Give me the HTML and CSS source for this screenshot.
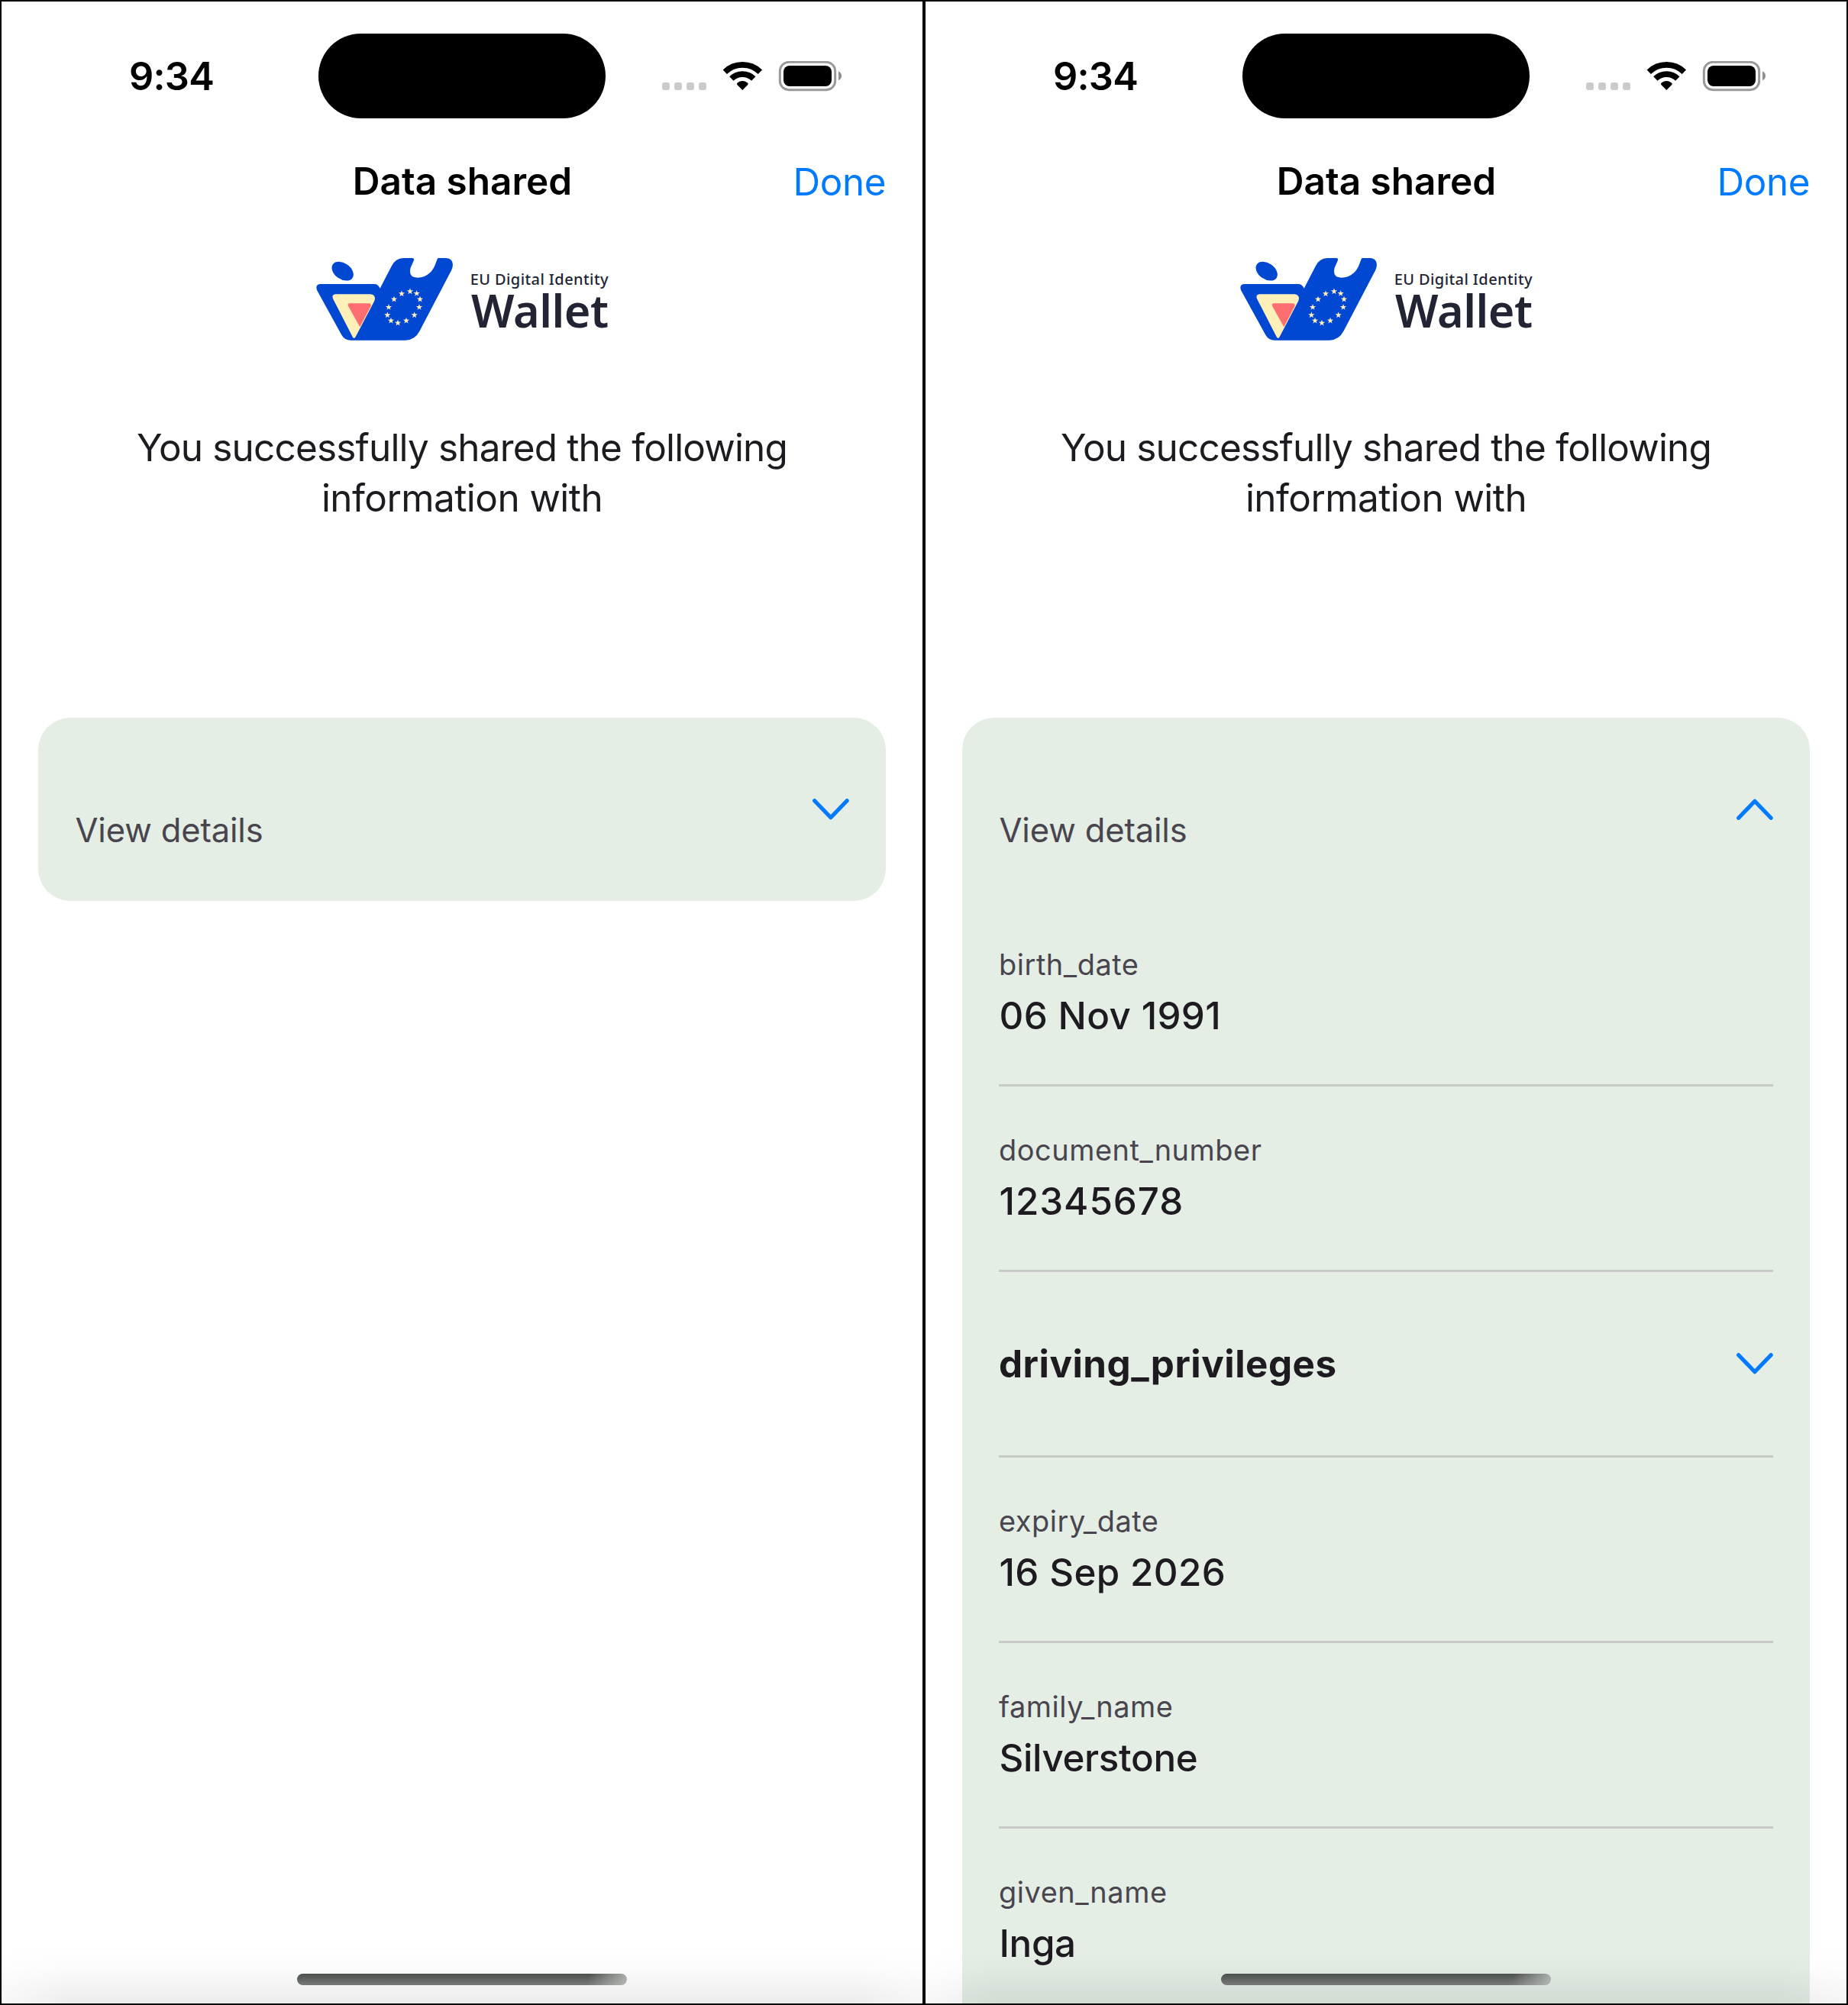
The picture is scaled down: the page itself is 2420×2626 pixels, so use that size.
FILE: index.html
```html
<!DOCTYPE html>
<html lang="en">
<head>
<meta charset="utf-8">
<title>Data shared</title>
<link rel="stylesheet" href="styles.css">
</head>
<body>
<svg class="defs" aria-hidden="true">
  <symbol id="signals" viewBox="81 60 708 120">
    <g fill="#cbcbcb">
      <rect x="81" y="144" width="30" height="30" rx="9"/>
      <rect x="129" y="144" width="30" height="30" rx="9"/>
      <rect x="177" y="144" width="30" height="30" rx="9"/>
      <rect x="225" y="144" width="30" height="30" rx="9"/>
    </g>
    <g transform="translate(397 174)">
      <path d="M-69.1-71.6A99.5 99.5 0 0 1 69.1-71.6M-43.4-45A62.5 62.5 0 0 1 43.4-45" fill="none" stroke="#000" stroke-width="23"/>
      <path d="M0 0L-21-21Q-24-25-19-29Q0-43 19-29Q24-25 21-21Z"/>
    </g>
    <rect x="544" y="64" width="217" height="109" rx="35" fill="none" stroke="#999" stroke-width="9"/>
    <rect x="558" y="78" width="189" height="81" rx="24"/>
    <path d="M774 100Q786 106 786 118Q786 130 774 136Z" fill="#8f8f8f"/>
  </symbol>
  <symbol id="star" viewBox="-12 -12 24 24">
    <path d="M0-12L2.8-3.9L11.4-3.7L4.6 1.5L7.1 9.7L0 4.8L-7.1 9.7L-4.6 1.5L-11.4-3.7L-2.8-3.9Z"/>
  </symbol>
  <symbol id="wallet" viewBox="0 0 1260 420">
    <path fill="#0048d2" d="M57 156H270Q286 156 293 173L338 86Q354 54 384 54H420Q428 54 426 62L413 92Q403 131 440 131C478 131 500 104 508 84L518 58Q519 54 524 54H552C578 54 585 78 573 103L449 340Q430 377 393 377H178Q154 377 142 356L45 180Q38 158 57 156Z"/>
    <ellipse cx="146" cy="105.500" rx="47" ry="31.500" transform="rotate(35 146 105.500)" fill="#0048d2"/>
    <path fill="#ffefb8" d="M117 196H254C270 196 278 209 270 224L196 365Q191 372 186 365L108 214Q102 198 117 196Z"/>
    <path fill="#ff6f72" d="M173 232H248Q258 232 257 242L214 325L168 242Q165 233 173 232Z"/>
    <g fill="#ffefb8">
      <use href="#star" x="398" y="172" width="26" height="26"/>
      <use href="#star" x="424" y="180" width="26" height="26"/>
      <use href="#star" x="437" y="203" width="26" height="26"/>
      <use href="#star" x="434" y="234" width="26" height="26"/>
      <use href="#star" x="415" y="265" width="26" height="26"/>
      <use href="#star" x="383" y="287" width="26" height="26"/>
      <use href="#star" x="350" y="296" width="26" height="26"/>
      <use href="#star" x="323" y="287" width="26" height="26"/>
      <use href="#star" x="309" y="265" width="26" height="26"/>
      <use href="#star" x="314" y="234" width="26" height="26"/>
      <use href="#star" x="335" y="203" width="26" height="26"/>
      <use href="#star" x="365" y="181" width="26" height="26"/>
    </g>
  </symbol>
  <symbol id="chevron" viewBox="0 0 48 28">
    <path d="M2.700 2.700L23.900 24.700L45.100 2.700" fill="none" stroke="#007aff" stroke-width="5.200" stroke-linecap="round" stroke-linejoin="round"/>
  </symbol>
</svg>

<main class="screens">
  <section class="phone">
    <div class="status">
      <span class="time">9:34</span>
      <span class="island"></span>
      <svg class="signals"><use href="#signals"/></svg>
    </div>
    <header class="nav">
      <h1 class="title">Data shared</h1>
      <a class="done">Done</a>
    </header>
    <svg class="logo" viewBox="0 0 1260 420">
      <use href="#wallet" width="1260" height="420"/>
      <text class="logo-small" x="647" y="158">EU Digital Identity</text>
      <text class="logo-large" x="651" y="326">Wallet</text>
    </svg>
    <p class="message"><span class="line-one">You successfully shared the following</span> <span class="line-two">information with</span></p>
    <div class="card">
      <div class="card-head">
        <span class="card-title">View details</span>
        <svg class="chevron"><use href="#chevron"/></svg>
      </div>
    </div>
    <div class="shade"></div>
    <div class="home"></div>
  </section>

  <section class="phone">
    <div class="status">
      <span class="time">9:34</span>
      <span class="island"></span>
      <svg class="signals"><use href="#signals"/></svg>
    </div>
    <header class="nav">
      <h1 class="title">Data shared</h1>
      <a class="done">Done</a>
    </header>
    <svg class="logo" viewBox="0 0 1260 420">
      <use href="#wallet" width="1260" height="420"/>
      <text class="logo-small" x="647" y="158">EU Digital Identity</text>
      <text class="logo-large" x="651" y="326">Wallet</text>
    </svg>
    <p class="message"><span class="line-one">You successfully shared the following</span> <span class="line-two">information with</span></p>
    <div class="card open">
      <div class="card-head">
        <span class="card-title">View details</span>
        <svg class="chevron up"><use href="#chevron"/></svg>
      </div>
      <div class="row"><span class="label">birth_date</span><span class="value date">06 Nov 1991</span></div>
      <div class="row"><span class="label">document_number</span><span class="value number">12345678</span></div>
      <div class="row group">
        <span class="group-title">driving_privileges</span>
        <svg class="chevron"><use href="#chevron"/></svg>
      </div>
      <div class="row"><span class="label">expiry_date</span><span class="value date">16 Sep 2026</span></div>
      <div class="row"><span class="label">family_name</span><span class="value">Silverstone</span></div>
      <div class="row"><span class="label">given_name</span><span class="value">Inga</span></div>
    </div>
    <div class="shade"></div>
    <div class="home"></div>
  </section>
</main>
</body>
</html>
```
FILE: styles.css
```css
* {
  box-sizing: border-box;
}

body {
  margin: 0;
  background: #fff;
  color: #1d1b20;
  font-family: Inter, "Liberation Sans", sans-serif;
}

.defs {
  display: none;
}

.screens {
  display: flex;
  width: 2420px;
  height: 2626px;
}

.phone {
  position: relative;
  display: flex;
  flex-direction: column;
  width: 1210px;
  height: 2626px;
  border: 2px solid #000;
  background: #fff;
  overflow: hidden;
}

.phone > * {
  flex-shrink: 0;
}

/* Status bar */
.status {
  display: flex;
  align-items: center;
  height: 153px;
  padding: 41px 0 0 167px;
  color: #000;
}

.time {
  width: 247.500px;
  padding-top: 2px;
  font-size: 50.500px;
  font-weight: 600;
  line-height: 60px;
  letter-spacing: -0.800px;
}

.island {
  width: 376px;
  height: 111px;
  border-radius: 56px;
  background: #000;
}

.signals {
  width: 236px;
  height: 40px;
  margin: 2px 0 0 74.500px;
}

/* Navigation bar */
.nav {
  display: grid;
  grid-template-columns: 1fr auto 1fr;
  align-items: center;
  height: 165px;
  padding: 0 48px 2px;
}

.title {
  grid-column: 2;
  margin: 0;
  padding-left: 1px;
  color: #000;
  font-size: 49.500px;
  font-weight: 600;
  line-height: 66px;
  letter-spacing: 0;
}

.done {
  justify-self: end;
  padding-top: 2px;
  color: #007aff;
  font-size: 49.300px;
  line-height: 66px;
  letter-spacing: -0.400px;
}

/* Logo */
.logo {
  width: 420px;
  height: 140px;
  margin-left: 398px;
  fill: #222433;
  font-family: "Noto Sans", "Open Sans", sans-serif;
}

.logo-small {
  font-size: 60px;
  font-weight: 500;
  letter-spacing: 1.250px;
}

.logo-large {
  font-size: 178px;
  font-weight: 600;
  letter-spacing: -1.400px;
}

.message {
  margin: 93px 0 255px;
  font-size: 49.500px;
  line-height: 66px;
  text-align: center;
}

.message span {
  display: block;
}

.line-one {
  letter-spacing: -0.840px;
}

.line-two {
  letter-spacing: -0.570px;
}

/* Details card */
.card {
  margin: 0 48px;
  padding: 0 48px;
  border-radius: 42px;
  background: #e4eee5;
}

/* The expanded card runs on below the fold */
.open {
  padding-bottom: 60px;
}

.card-head {
  display: flex;
  align-items: center;
  justify-content: space-between;
  height: 240px;
}

.card-title {
  padding: 54px 0 0 0.500px;
  color: #49454f;
  font-size: 43.500px;
  line-height: 60px;
  letter-spacing: -0.150px;
}

.chevron {
  width: 48px;
  height: 28px;
}

.up {
  transform: scaleY(-1);
}

.row {
  display: flex;
  flex-direction: column;
  gap: 7px;
  height: 243px;
  padding-top: 56px;
  border-bottom: 3px solid #c6cbc8;
}

.row:last-child {
  border-bottom: 0;
}

.label {
  color: #49454f;
  font-size: 37.900px;
  line-height: 54px;
  letter-spacing: 0.560px;
}

.value {
  padding-left: 0.500px;
  font-size: 49.300px;
  font-weight: 500;
  line-height: 66px;
  letter-spacing: -0.350px;
}

.date {
  letter-spacing: 0.360px;
}

.number {
  letter-spacing: 0.950px;
}

.group {
  flex-direction: row;
  align-items: center;
  justify-content: space-between;
  padding-top: 0;
}

.group-title {
  font-size: 49.300px;
  font-weight: 700;
  line-height: 66px;
  letter-spacing: 0.510px;
}

/* Home indicator and the shade behind it */
.shade {
  position: absolute;
  right: 0;
  bottom: 0;
  left: 0;
  height: 70px;
  background: linear-gradient(rgba(0, 0, 0, 0), rgba(0, 0, 0, 0.015) 35%, rgba(0, 0, 0, 0.075));
  mask-image: linear-gradient(90deg, rgba(0, 0, 0, 0.400), #000 90px, #000 1116px, rgba(0, 0, 0, 0.500));
}

.home {
  position: absolute;
  bottom: 24px;
  left: 387px;
  width: 432px;
  height: 15px;
  border-radius: 8px;
  background:
    linear-gradient(100deg, rgba(190, 194, 191, 0) 88%, rgba(190, 194, 191, 0.850)),
    linear-gradient(#4c504d, #777a78);
}
```
